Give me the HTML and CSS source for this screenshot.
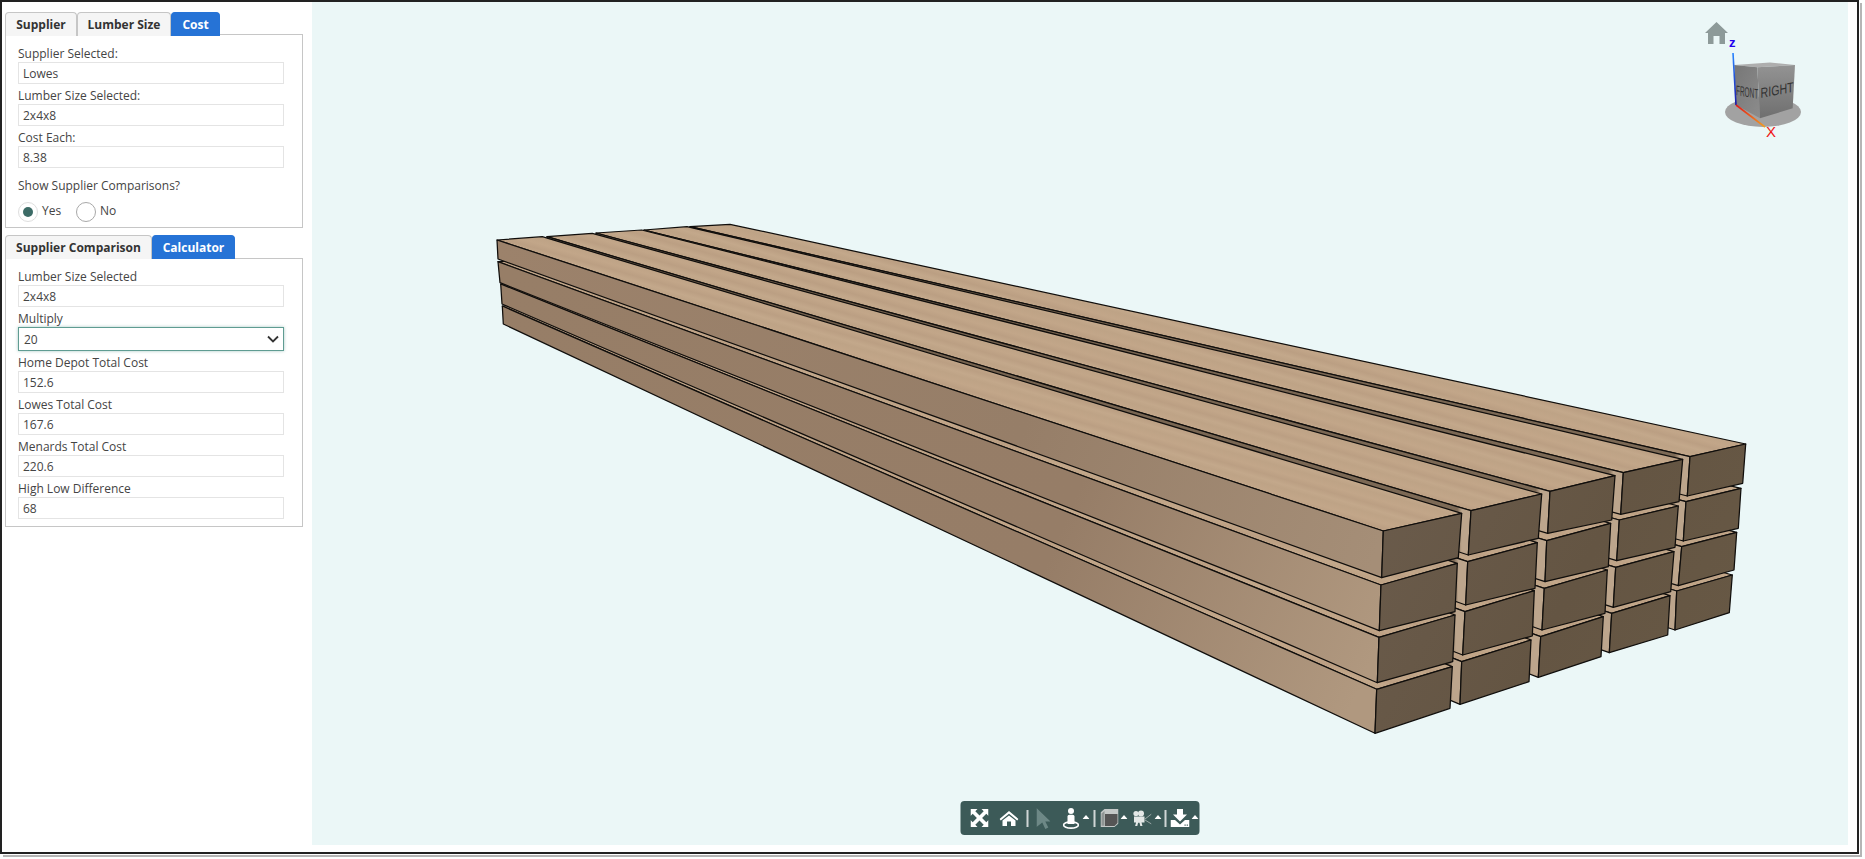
FILE: index.html
```html
<!DOCTYPE html>
<html lang="en">
<head>
<meta charset="utf-8">
<title>Lumber Calculator</title>
<link rel="stylesheet" href="styles.css">
</head>
<body>
<div class="frame">
  <aside class="sidebar">
    <section class="tabset">
      <div class="tabs tabs-a">
        <div class="tab t-supplier">Supplier</div>
        <div class="tab t-size">Lumber Size</div>
        <div class="tab t-cost active">Cost</div>
      </div>
      <div class="panel panel-a">
        <div class="label">Supplier Selected:</div>
        <div class="field">Lowes</div>
        <div class="label">Lumber Size Selected:</div>
        <div class="field">2x4x8</div>
        <div class="label">Cost Each:</div>
        <div class="field">8.38</div>
        <div class="label question">Show Supplier Comparisons?</div>
        <div class="radios">
          <span class="radio checked"><span class="dot"></span></span><span class="radio-text">Yes</span>
          <span class="radio"></span><span class="radio-text">No</span>
        </div>
      </div>
    </section>
    <section class="tabset">
      <div class="tabs">
        <div class="tab t-compare">Supplier Comparison</div>
        <div class="tab t-calc active">Calculator</div>
      </div>
      <div class="panel panel-b">
        <div class="label">Lumber Size Selected</div>
        <div class="field">2x4x8</div>
        <div class="label">Multiply</div>
        <div class="field select">20
          <svg class="chevron" viewBox="0 0 12 8" width="12" height="8"><path d="M1 1.5 6 6.5 11 1.5" fill="none" stroke="#333" stroke-width="1.8"/></svg>
        </div>
        <div class="label">Home Depot Total Cost</div>
        <div class="field">152.6</div>
        <div class="label">Lowes Total Cost</div>
        <div class="field">167.6</div>
        <div class="label">Menards Total Cost</div>
        <div class="field">220.6</div>
        <div class="label">High Low Difference</div>
        <div class="field">68</div>
      </div>
    </section>
  </aside>

  <main class="viewer">
    <svg class="scene" viewBox="312 2 1536 843" width="1536" height="843">
      <defs>
        <linearGradient id="wt" gradientUnits="userSpaceOnUse" x1="0" y1="0" x2="-5.6" y2="20" spreadMethod="repeat">
          <stop offset="0" stop-color="#bea386"/>
          <stop offset=".3" stop-color="#c2a689"/>
          <stop offset=".55" stop-color="#bb9f83"/>
          <stop offset=".8" stop-color="#c3a88b"/>
          <stop offset="1" stop-color="#bea386"/>
        </linearGradient>
        <linearGradient id="l1" gradientUnits="userSpaceOnUse" x1="497" y1="240" x2="1383" y2="531">
          <stop offset="0" stop-color="#9c826b"/>
          <stop offset=".6" stop-color="#967e68"/>
          <stop offset="1" stop-color="#a58e77"/>
        </linearGradient>
        <linearGradient id="l2" gradientUnits="userSpaceOnUse" x1="497" y1="260" x2="1380" y2="640">
          <stop offset="0" stop-color="#977e67"/>
          <stop offset=".65" stop-color="#967d67"/>
          <stop offset="1" stop-color="#b0987f"/>
        </linearGradient>
        <linearGradient id="li" x1="0" y1="0" x2="1" y2="0">
          <stop offset="0" stop-color="#6f5d4a"/>
          <stop offset=".985" stop-color="#7d6a56"/>
          <stop offset=".99" stop-color="#bca58c"/>
          <stop offset="1" stop-color="#bca58c"/>
        </linearGradient>
        <linearGradient id="fr" gradientUnits="userSpaceOnUse" x1="1380" y1="500" x2="1750" y2="700">
          <stop offset="0" stop-color="#6a5b4b"/>
          <stop offset=".5" stop-color="#645543"/>
          <stop offset="1" stop-color="#685945"/>
        </linearGradient>
        <linearGradient id="cr" x1="0" y1="0" x2="0" y2="1">
          <stop offset="0" stop-color="#939393"/>
          <stop offset="1" stop-color="#6f6f6f"/>
        </linearGradient>
        <linearGradient id="cf" x1="0" y1="0" x2="1" y2="1">
          <stop offset="0" stop-color="#777"/>
          <stop offset="1" stop-color="#8c8c8c"/>
        </linearGradient>
        <linearGradient id="az" gradientUnits="userSpaceOnUse" x1="1733" y1="53" x2="1736" y2="105">
          <stop offset="0" stop-color="#2a86ff"/>
          <stop offset="1" stop-color="#1a18a8"/>
        </linearGradient>
        <linearGradient id="ax" gradientUnits="userSpaceOnUse" x1="1736" y1="105" x2="1765" y2="127">
          <stop offset="0" stop-color="#e01818"/>
          <stop offset="1" stop-color="#f2a024"/>
        </linearGradient>
      </defs>

      <g class="lumber">
        <!-- column 5 -->
        <polygon fill="url(#wt)" points="695.3,292.7 735.3,290.3 1732.3,575 1676.7,591"/>
        <polygon fill="url(#li)" points="695.3,292.7 1676.7,591 1675,630 696.3,310.7"/>
        <polygon fill="url(#fr)" points="1676.7,591 1732.3,575 1729.3,612.7 1675,630"/>
        <polygon fill="url(#wt)" points="693.7,270.7 733.7,268.3 1736.7,532.3 1681.7,546.7"/>
        <polygon fill="url(#li)" points="693.7,270.7 1681.7,546.7 1678.3,585.7 695,290.7"/>
        <polygon fill="url(#fr)" points="1681.7,546.7 1736.7,532.3 1734,570 1678.3,585.7"/>
        <polygon fill="url(#wt)" points="691,248.4 731,246 1741,488.3 1686,501.7"/>
        <polygon fill="url(#li)" points="691,248.4 1686,501.7 1683.3,541 693,269.4"/>
        <polygon fill="url(#fr)" points="1686,501.7 1741,488.3 1738.3,528.3 1683.3,541"/>
        <polygon fill="url(#wt)" points="690,226.7 730,224.3 1745.7,444 1690,456.7"/>
        <polygon fill="url(#li)" points="690,226.7 1690,456.7 1687.3,496 691,245.7"/>
        <polygon fill="url(#fr)" points="1690,456.7 1745.7,444 1742.7,483.3 1687.3,496"/>
        <!-- column 4 -->
        <polygon fill="url(#wt)" points="649.3,296 692.3,292.7 1670,595.7 1611.7,613.3"/>
        <polygon fill="url(#li)" points="649.3,296 1611.7,613.3 1609.3,652.7 650.3,314"/>
        <polygon fill="url(#fr)" points="1611.7,613.3 1670,595.7 1667.7,635 1609.3,652.7"/>
        <polygon fill="url(#wt)" points="647.7,274 690.7,270.7 1674,551.7 1615.7,567.3"/>
        <polygon fill="url(#li)" points="647.7,274 1615.7,567.3 1613.3,607.3 649,294"/>
        <polygon fill="url(#fr)" points="1615.7,567.3 1674,551.7 1670.7,591.7 1613.3,607.3"/>
        <polygon fill="url(#wt)" points="645,251.7 688,248.4 1678.3,506 1619.3,520"/>
        <polygon fill="url(#li)" points="645,251.7 1619.3,520 1616.7,560.7 647,272.7"/>
        <polygon fill="url(#fr)" points="1619.3,520 1678.3,506 1675,547.3 1616.7,560.7"/>
        <polygon fill="url(#wt)" points="644,230 687,226.7 1682.7,459.3 1623.3,472.7"/>
        <polygon fill="url(#li)" points="644,230 1623.3,472.7 1620.7,514.3 645,249"/>
        <polygon fill="url(#fr)" points="1623.3,472.7 1682.7,459.3 1679,501.7 1620.7,514.3"/>
        <!-- column 3 -->
        <polygon fill="url(#wt)" points="601.3,299 647,296 1603.3,616.7 1540.7,636.7"/>
        <polygon fill="url(#li)" points="601.3,299 1540.7,636.7 1538.3,677.3 602.3,317"/>
        <polygon fill="url(#fr)" points="1540.7,636.7 1603.3,616.7 1601,656.7 1538.3,677.3"/>
        <polygon fill="url(#wt)" points="599.7,277 645.4,274 1607.3,570 1544.3,588.3"/>
        <polygon fill="url(#li)" points="599.7,277 1544.3,588.3 1542,630 601,297"/>
        <polygon fill="url(#fr)" points="1544.3,588.3 1607.3,570 1605,613.3 1542,630"/>
        <polygon fill="url(#wt)" points="597,254.7 642.7,251.7 1610.7,523.3 1546.7,540.7"/>
        <polygon fill="url(#li)" points="597,254.7 1546.7,540.7 1545,581.7 599,275.7"/>
        <polygon fill="url(#fr)" points="1546.7,540.7 1610.7,523.3 1608.3,566.7 1545,581.7"/>
        <polygon fill="url(#wt)" points="596,233 641.7,230 1615,475.7 1550,491.3"/>
        <polygon fill="url(#li)" points="596,233 1550,491.3 1547.7,533.3 597,252"/>
        <polygon fill="url(#fr)" points="1550,491.3 1615,475.7 1611.7,520 1547.7,533.3"/>
        <!-- column 2 -->
        <polygon fill="url(#wt)" points="552.3,302.7 597.6,299.3 1531,640 1461.7,661.7"/>
        <polygon fill="url(#li)" points="552.3,302.7 1461.7,661.7 1460,704.3 553.3,320.7"/>
        <polygon fill="url(#fr)" points="1461.7,661.7 1531,640 1529,681.7 1460,704.3"/>
        <polygon fill="url(#wt)" points="550.7,280.7 596,277.3 1534.3,590.7 1465,611.7"/>
        <polygon fill="url(#li)" points="550.7,280.7 1465,611.7 1462.7,655 552,300.7"/>
        <polygon fill="url(#fr)" points="1465,611.7 1534.3,590.7 1532.3,636 1462.7,655"/>
        <polygon fill="url(#wt)" points="548,258.4 593.3,255 1537.3,542.7 1467.7,561.7"/>
        <polygon fill="url(#li)" points="548,258.4 1467.7,561.7 1465.7,605 550,279.4"/>
        <polygon fill="url(#fr)" points="1467.7,561.7 1537.3,542.7 1535,588.3 1465.7,605"/>
        <polygon fill="url(#wt)" points="547,236.7 592.3,233.3 1541.7,494 1471,510.7"/>
        <polygon fill="url(#li)" points="547,236.7 1471,510.7 1468.3,555 548,255.7"/>
        <polygon fill="url(#fr)" points="1471,510.7 1541.7,494 1538.3,538.3 1468.3,555"/>
        <!-- column 1 -->
        <polygon fill="url(#wt)" points="502.3,306 547.6,302.7 1452.3,666.7 1376.7,689.3"/>
        <polygon fill="url(#l2)" points="502.3,306 1376.7,689.3 1375,733.3 503.3,324"/>
        <polygon fill="url(#fr)" points="1376.7,689.3 1452.3,666.7 1450,708.3 1375,733.3"/>
        <polygon fill="url(#wt)" points="500.7,284 546,280.7 1455,615 1379,637.3"/>
        <polygon fill="url(#l2)" points="500.7,284 1379,637.3 1377.3,682.7 502,304"/>
        <polygon fill="url(#fr)" points="1379,637.3 1455,615 1452.7,661.7 1377.3,682.7"/>
        <polygon fill="url(#wt)" points="498,261.7 543.3,258.4 1457.3,563.3 1381,585"/>
        <polygon fill="url(#l2)" points="498,261.7 1381,585 1379.3,630.7 500,282.7"/>
        <polygon fill="url(#fr)" points="1381,585 1457.3,563.3 1455,611.7 1379.3,630.7"/>
        <polygon fill="url(#wt)" points="497,240 542.3,236.7 1461.7,513.3 1383.3,531"/>
        <polygon fill="url(#l1)" points="497,240 1383.3,531 1381.7,577.7 498,259"/>
        <polygon fill="url(#fr)" points="1383.3,531 1461.7,513.3 1458.3,557.7 1381.7,577.7"/>
      </g>

      <g class="navcube">
        <path class="nav-home" d="M1716.5 22 1728 33H1725V44H1719.5V36H1713.5V44H1708V33H1705Z"/>
        <text class="axis-z" x="1729" y="47">z</text>
        <ellipse class="cube-base" cx="1763" cy="112" rx="38" ry="15"/>
        <polygon class="cube-top" points="1734.3,65 1770,62.5 1795,65 1757.3,67.3"/>
        <polygon fill="url(#cf)" points="1734.3,65 1757.3,67.3 1760,118.3 1736,105"/>
        <polygon fill="url(#cr)" points="1757.3,67.3 1795,65 1792.7,108.3 1760,118.3"/>
        <text class="cube-label" transform="matrix(.46 .08 0 1 1736 95)">FRONT</text>
        <text class="cube-label" transform="matrix(.76 -.14 0 1 1760.5 98)">RIGHT</text>
        <line x1="1733" y1="53" x2="1736" y2="105" stroke="url(#az)" stroke-width="1.6"/>
        <line x1="1736" y1="105" x2="1765" y2="127" stroke="url(#ax)" stroke-width="1.6"/>
        <text class="axis-x" x="1766" y="137">X</text>
      </g>
    </svg>

    <nav class="toolbar">
      <svg class="ic" width="18" height="18" viewBox="0 0 18 18"><path d="M0 0h7L4.8 2.2 9 6.4l4.2-4.2L11 0h7v7l-2.2-2.2L11.6 9l4.2 4.2L18 11v7h-7l2.2-2.2L9 11.6l-4.2 4.2L7 18H0v-7l2.2 2.2L6.4 9 2.2 4.8 0 7z"/></svg>
      <svg class="ic ic-home" width="19" height="15" viewBox="0 0 19 15"><path d="M9.5 0 19 8l-1.3 1.4L9.5 2.8 1.3 9.4 0 8zM3 9.6 9.5 4.4 16 9.6V15h-4.5v-4.5h-4V15H3z"/></svg>
      <span class="sep"></span>
      <svg class="ic ic-cursor" width="14" height="21" viewBox="0 0 14 21"><path d="M0 0 14 13.5H8.8L11.8 19.6 8.8 21 5.8 14.6 0 19z"/></svg>
      <span class="drop drop-person">
        <svg class="ic" width="17" height="21" viewBox="0 0 17 21"><circle cx="8.5" cy="3" r="3"/><path d="M5 8.5Q5 6.8 6.8 6.8H10.2Q12 6.8 12 8.5V16H5z"/><ellipse cx="8.5" cy="17" rx="7.4" ry="3.1" fill="none" stroke="#fff" stroke-width="1.6"/></svg>
        <svg class="caret" width="7" height="4" viewBox="0 0 7 4"><path d="M3.5 0 7 4H0z"/></svg>
      </span>
      <span class="sep sep-b"></span>
      <span class="drop drop-cube">
        <svg class="ic" width="18" height="18" viewBox="0 0 18 18"><path fill="#c4c8c7" d="M0 3.5 4 0H18V14.5L14 18H0z"/><path fill="#555" d="M4.5 5H17V14L14 17H4.5z"/><path fill="#8f9594" d="M1 4.5 4 2V16.8H1z"/></svg>
        <svg class="caret" width="7" height="4" viewBox="0 0 7 4"><path d="M3.5 0 7 4H0z"/></svg>
      </span>
      <span class="drop drop-cam">
        <svg class="ic ic-cam" width="19" height="16" viewBox="0 0 19 16"><circle cx="3.5" cy="3.5" r="2.6"/><circle cx="8.5" cy="3.5" r="3"/><path d="M1.5 6.5H12V12.5H9L10 16H7.8L7 12.8H5.6L4.8 16H2.6L3.6 12.5H1.5z"/><path d="M12.5 9 19 4M12.5 10 19 14" fill="none" stroke="#9aa8a6" stroke-width="1"/></svg>
        <svg class="caret" width="7" height="4" viewBox="0 0 7 4"><path d="M3.5 0 7 4H0z"/></svg>
      </span>
      <span class="sep sep-c"></span>
      <span class="drop drop-dl">
        <svg class="ic" width="19" height="18" viewBox="0 0 19 18"><path d="M6.5 0h6v5.5h4l-7 7-7-7h4z"/><path d="M0 11h4.5l5 4.6 5-4.6H19v7H0z"/><path fill="#3c5a58" d="M14 15.5h1.2v1.2H14zM16.2 15.5h1.2v1.2h-1.2z"/></svg>
        <svg class="caret" width="7" height="4" viewBox="0 0 7 4"><path d="M3.5 0 7 4H0z"/></svg>
      </span>
    </nav>
  </main>
</div>
</body>
</html>
```

FILE: styles.css
```css
* {
  box-sizing: border-box;
}

html,
body {
  margin: 0;
  height: 100%;
  background: #fff;
  overflow: hidden;
}

body {
  font-family: "Open Sans", "Noto Sans", sans-serif;
  font-size: 12px;
  color: #444;
}

.frame {
  display: flex;
  width: 1859px;
  height: 854px;
  padding: 0 9px 7px 0;
  border: 2px solid #222;
  box-shadow: 1px 1px 0 #fff, 3px 3px 0 #b5b5b5;
}

/* Sidebar */
.sidebar {
  flex: 0 0 310px;
  display: flex;
  flex-direction: column;
  gap: 7px;
  padding: 10px 7px 0 3px;
}

.tabs {
  display: flex;
  height: 23px;
}

.tabs-a {
  height: 22px;
}

.tab {
  display: flex;
  align-items: center;
  justify-content: center;
  height: 24px;
  background: #f5f5f5;
  border: 1px solid #c6c6c6;
  border-bottom: 0;
  border-radius: 4px 4px 0 0;
  color: #333;
  font-weight: 700;
  position: relative;
  z-index: 1;
}

.tab.active {
  background: #2673d6;
  border-color: #2673d6;
  color: #fff;
}

.t-supplier { width: 72px; }
.t-size { width: 94px; }
.t-cost { width: 49px; }
.t-compare { width: 147px; }
.t-calc { width: 83px; }

.panel {
  width: 298px;
  padding: 0 19px 7px 12px;
  border: 1px solid #c6c6c6;
}

.panel-a {
  height: 194px;
  padding-top: 7px;
}

.panel-b {
  height: 269px;
  padding-top: 6px;
}

.label {
  height: 20px;
  line-height: 24px;
}

.question {
  margin-top: 6px;
}

.field {
  display: flex;
  align-items: center;
  width: 266px;
  height: 22px;
  padding-left: 4px;
  background: #fff;
  border: 1px solid #e4e4e4;
}

.select {
  justify-content: space-between;
  height: 24px;
  padding: 0 4px 0 5px;
  border-color: #5f9c92;
  box-shadow: 0 0 3px rgba(95, 156, 146, 0.55);
}

.chevron {
  display: block;
}

.radios {
  display: flex;
  align-items: center;
  margin-top: 8px;
}

.radio {
  display: flex;
  align-items: center;
  justify-content: center;
  flex: none;
  width: 20px;
  height: 20px;
  border: 1px solid #a8a8a8;
  border-radius: 50%;
  background: #fff;
}

.radio.checked {
  border-color: #dedede;
}

.dot {
  width: 10px;
  height: 10px;
  border-radius: 50%;
  background: #3c6b66;
}

.radio-text {
  margin: -4px 15px 0 4px;
  width: 19px;
}

/* 3D viewer */
.viewer {
  position: relative;
  flex: 1;
  background: #ebf7f7;
  overflow: hidden;
}

.scene {
  display: block;
}

.lumber polygon {
  stroke: #100e0c;
  stroke-width: 1.25;
  stroke-linejoin: round;
}

.nav-home {
  fill: #8d9a99;
}

.cube-base {
  fill: #a2a2a2;
}

.cube-top {
  fill: #aeaeae;
}

.cube-label {
  font-family: "Liberation Sans", sans-serif;
  font-size: 14px;
  fill: #333;
}

.axis-z {
  font-family: "Liberation Sans", sans-serif;
  font-size: 13px;
  font-weight: 700;
  fill: #2200ee;
}

.axis-x {
  font-family: "Liberation Sans", sans-serif;
  font-size: 15px;
  fill: #f01414;
}

/* Bottom toolbar */
.toolbar {
  position: absolute;
  left: 50%;
  bottom: 10px;
  display: flex;
  align-items: center;
  width: 239px;
  height: 34px;
  padding-left: 10px;
  transform: translateX(-50%);
  background: #3c5a58;
  border-radius: 4px;
}

.ic,
.caret {
  display: block;
  flex: none;
  fill: #fff;
}

.ic-home {
  margin-left: 11px;
}

.ic-cursor {
  margin-left: 8.5px;
  fill: #6d8886;
}

.ic-cam {
  fill: #e4e8e7;
}

.sep {
  flex: none;
  width: 1.5px;
  height: 17px;
  margin-left: 8px;
  background: #cfd6d5;
}

.sep-b {
  margin-left: 4px;
}

.sep-c {
  margin-left: 3px;
}

.drop {
  display: flex;
  align-items: center;
  gap: 3px;
  margin-left: 5px;
}

.drop-person {
  margin-left: 12px;
}

.drop-cube {
  gap: 2px;
  margin-left: 5.5px;
}

.drop-dl {
  gap: 2px;
  margin-left: 4.5px;
}

.caret {
  margin-top: -2px;
}
```
